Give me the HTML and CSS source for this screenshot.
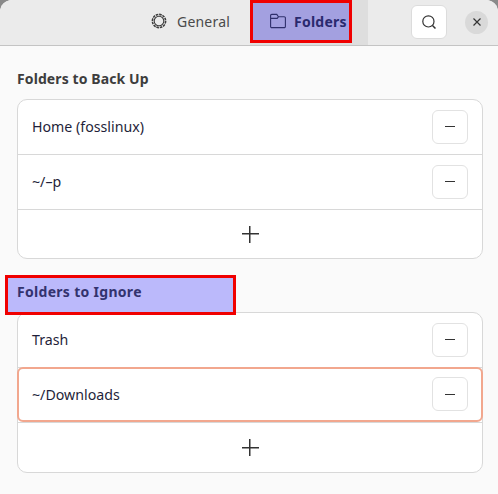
FILE: index.html
```html
<!DOCTYPE html>
<html lang="en">
<head>
<meta charset="utf-8">
<title>Preferences</title>
<link rel="stylesheet" href="styles.css">
</head>
<body>
<div class="window">
  <header class="header">
    <nav class="tabs">
      <div class="tab tab-general">
        <svg class="tab-icon" viewBox="0 0 16 16" fill="none" stroke="#3d3d3d"><circle cx="8" cy="8" r="6.6" stroke-width="1.6" stroke-dasharray="2.6 .85"/><circle cx="8" cy="8" r="4.8" stroke-width="1.1"/></svg>
        <span>General</span>
      </div>
      <div class="tab tab-folders">
        <div class="tab-mark"></div>
        <svg class="tab-icon" viewBox="0 0 16 16" fill="none" stroke="#2f2f6b" stroke-width="1.1"><path d="M.6 13.4V2.6A1.2 1.2 0 0 1 1.8 1.4h5l1.6 2.4h5.8a1.2 1.2 0 0 1 1.2 1.2v8.4a1.2 1.2 0 0 1-1.2 1.2H1.8a1.2 1.2 0 0 1-1.2-1.2ZM.6 5.4h6.6l1.2-1.6"/></svg>
        <span class="tab-label">Folders</span>
      </div>
    </nav>
    <button class="search-btn" aria-label="Search">
      <svg viewBox="0 0 16 16" width="16" height="16" fill="none" stroke="#333" stroke-width="1.2"><circle cx="7.4" cy="7.4" r="5.6"/><path d="m11.5 11.5 3 3" stroke-width="1.5"/></svg>
    </button>
    <button class="close-btn" aria-label="Close">
      <svg viewBox="0 0 8 8" width="8" height="8" fill="none" stroke="#333" stroke-width="1.2"><path d="m.5.5 7 7M7.500.5l-7 7"/></svg>
    </button>
  </header>
  <main class="content">
    <section class="group">
      <h2 class="group-title">Folders to Back Up</h2>
      <div class="card">
        <div class="row"><span>Home (fosslinux)</span><button class="minus"></button></div>
        <div class="row"><span>~/–p</span><button class="minus"></button></div>
        <div class="add"><span class="plus"></span></div>
      </div>
    </section>
    <section class="group">
      <h2 class="group-title title-ignore">Folders to Ignore</h2>
      <div class="card">
        <div class="row"><span>Trash</span><button class="minus"></button></div>
        <div class="row row-focus"><span>~/Downloads</span><button class="minus"></button></div>
        <div class="add add-last"><span class="plus"></span></div>
      </div>
      <div class="title-mark"></div>
    </section>
  </main>
</div>
</body>
</html>
```
FILE: styles.css
```css
* { box-sizing: border-box; }
html, body { margin: 0; height: 100%; }
body {
  background: #8a8a8a;
  font-family: "Noto Sans", "Open Sans", sans-serif;
  color: #2b2b2b;
  overflow: hidden;
}
.window {
  width: 498px;
  height: 494px;
  background: #fafafa;
  border-radius: 12px 12px 0 0;
  overflow: hidden;
  display: flex;
  flex-direction: column;
}
.header {
  height: 46px;
  flex: none;
  background: #ebebeb;
  border-bottom: 1px solid #c4c4c4;
  display: flex;
  align-items: center;
  padding-left: 135px;
}
.tabs { display: flex; height: 45px; }
.tab {
  display: flex;
  align-items: center;
  gap: 10px;
  font-size: 14px;
  color: #4a4a4a;
  height: 42px;
}
.tab-general { width: 115px; padding-left: 16px; letter-spacing: .2px; }
.tab-folders {
  width: 118px;
  height: 45px;
  padding: 0 0 3px 20px;
  background: #dedede;
  position: relative;
  gap: 8px;
}
.tab-icon { width: 16px; height: 16px; flex: none; position: relative; }
.tab-label {
  font-weight: 700;
  color: #2a2a6e;
  position: relative;
  font-size: 14px;
  letter-spacing: .25px;
}
.tab-mark {
  position: absolute;
  left: 0;
  top: 0;
  width: 102px;
  height: 43px;
  background: #a3a0e0;
  border: 3px solid #f00000;
}
.search-btn {
  margin: 0 0 1px 43px;
  width: 36px;
  height: 34px;
  padding: 0;
  background: #fff;
  border: 1px solid #dcdcdc;
  border-radius: 6px;
  display: flex;
  align-items: center;
  justify-content: center;
}
.close-btn {
  margin: 0 0 1px 18px;
  width: 23px;
  height: 23px;
  padding: 0;
  background: #d9d9d9;
  border: 0;
  border-radius: 50%;
  display: flex;
  align-items: center;
  justify-content: center;
}
.content {
  padding: 0 15px 0 17px;
  display: flex;
  flex-direction: column;
}
.group { position: relative; }
.group-title {
  margin: 0;
  height: 53px;
  padding-top: 24px;
  font-size: 14px;
  line-height: 18px;
  font-weight: 700;
  letter-spacing: .1px;
  color: #3d3d3d;
}
.title-ignore {
  position: relative;
  z-index: 2;
  letter-spacing: .3px;
  color: #33336e;
}
.title-mark {
  position: absolute;
  z-index: 1;
  left: -12px;
  top: 16px;
  width: 231px;
  height: 40px;
  background: #bbb9fb;
  border: 3px solid #f00000;
}
.card {
  background: #fff;
  border: 1px solid #d8d8d8;
  border-radius: 10px;
}
.row {
  height: 55px;
  display: flex;
  align-items: center;
  justify-content: space-between;
  padding: 0 14px 1px;
  border-bottom: 1px solid #d8d8d8;
  font-size: 14.2px;
  color: #1f1f3a;
}
.row-focus {
  border: 2px solid #f2a78e;
  border-radius: 6px;
  margin: -1px -1px 0;
  padding: 0 13px 1px;
  height: 55px;
}
.minus {
  width: 36px;
  height: 34px;
  padding: 0;
  background: #fff;
  border: 1px solid #e2e2e2;
  border-radius: 6px;
  display: flex;
  align-items: center;
  justify-content: center;
}
.minus::before {
  content: "";
  width: 10px;
  height: 1px;
  background: #333;
}
.add {
  height: 48px;
  display: flex;
  align-items: center;
  justify-content: center;
}
.add-last {
  height: 50px;
  border-top: 1px solid #d8d8d8;
}
.plus {
  width: 17px;
  height: 17px;
  background:
    linear-gradient(#333, #333) center / 17px 1.5px no-repeat,
    linear-gradient(#333, #333) center / 1.5px 17px no-repeat;
}
```
